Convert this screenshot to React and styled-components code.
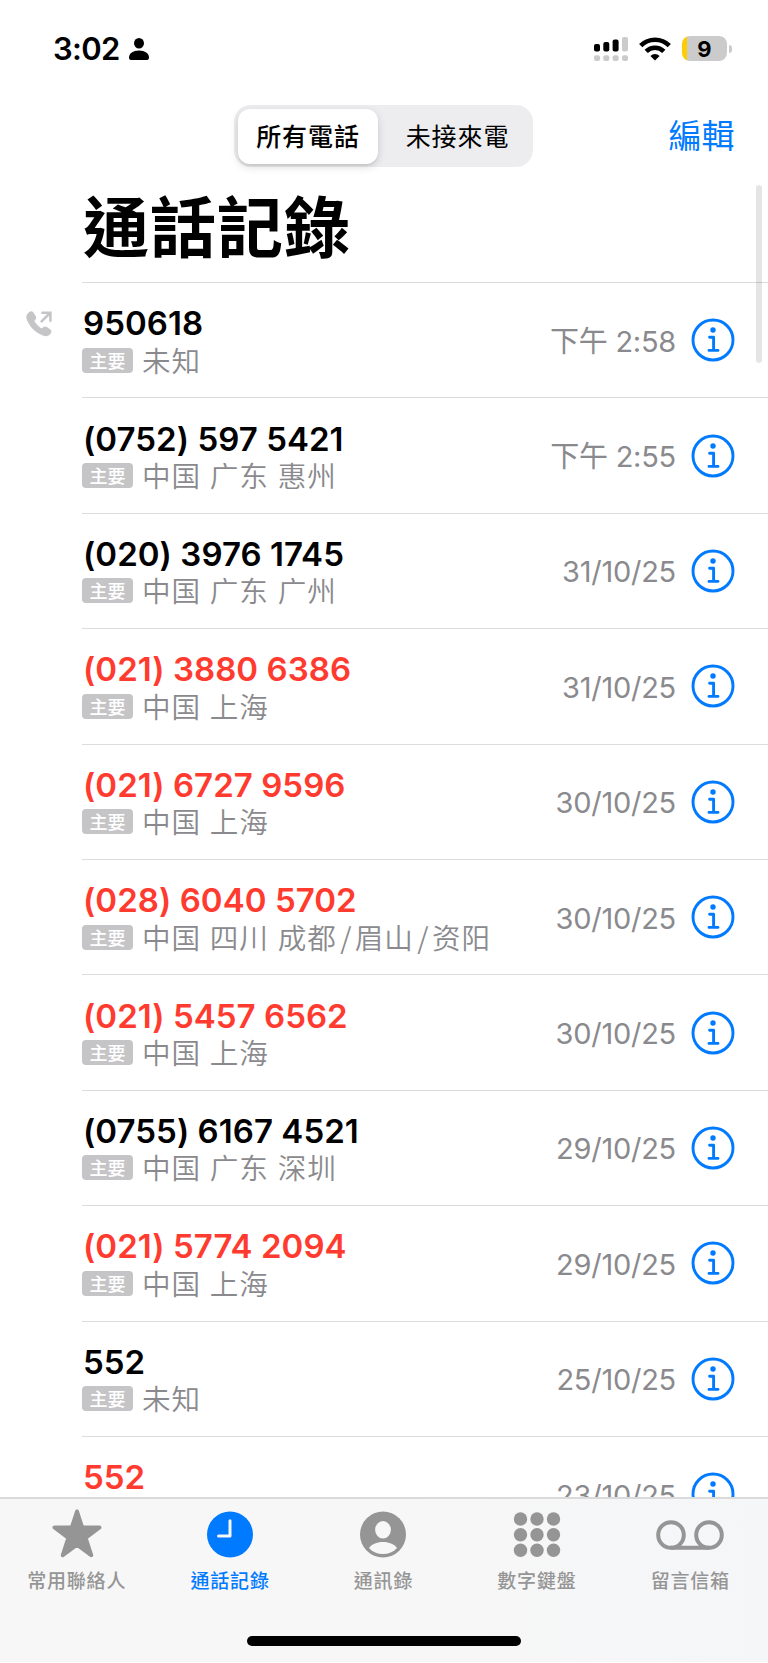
import React, { Fragment } from 'react';
import styled, { createGlobalStyle } from 'styled-components';

const GlobalStyle = createGlobalStyle`
    * {
        box-sizing: border-box;
    }
    body {
        margin: 0;
        background: #fff;
        font-family: Inter, "Noto Sans CJK TC", sans-serif;
        color: #000;
    }
    svg {
        display: block;
        flex-shrink: 0;
    }
`;

const Screen = styled.div`
    position: relative;
    display: flex;
    flex-direction: column;
    width: 768px;
    height: 1663px;
    padding-bottom: 1px;
    overflow: hidden;
    background: #fff;
`;

const StatusBar = styled.header`
    display: flex;
    justify-content: space-between;
    height: 105px;
    padding: 28.5px 36px 0 53px;
`;

const StatusGroup = styled.div`
    display: flex;
    align-items: center;
    gap: ${props => props.gap}px;
    height: 40px;
`;

const Clock = styled.span`
    font-size: 31px;
    font-weight: 600;
    line-height: 40px;
    letter-spacing: -0.7px;
`;

const Battery = styled.div`
    display: flex;
    align-items: center;
    gap: 2px;
    .cell {
        width: 45px;
        height: 25px;
        border-radius: 8px;
        background: linear-gradient(to right, #ffcc00 4.5px, #cbcbcb 4.5px);
        font-size: 22px;
        font-weight: 700;
        line-height: 26px;
        text-align: center;
    }
    .nub {
        width: 3px;
        height: 8px;
        border-radius: 0 4px 4px 0;
        background: #cbcbcb;
    }
`;

const NavBar = styled.nav`
    display: grid;
    grid-template-columns: 234px 299px 1fr;
    align-items: center;
    height: 62px;
`;

const Segmented = styled.div`
    grid-column: 2;
    display: flex;
    gap: 8px;
    height: 62px;
    padding: 3.5px 4px;
    border-radius: 17px;
    background: #ededef;
`;

const Segment = styled.button`
    flex: ${props => props.active ? '0 0 140px' : '1'};
    padding: 0 0 2px;
    border: 0;
    border-radius: 12px;
    background: ${props => props.active ? '#fff' : 'transparent'};
    box-shadow: ${props => props.active ? '0 3px 8px rgba(0, 0, 0, 0.14), 0 2px 2px rgba(0, 0, 0, 0.06)' : 'none'};
    color: #000;
    font: ${props => props.active ? 500 : 400} 25px/52px "Noto Sans CJK TC", sans-serif;
    letter-spacing: 0.9px;
`;

const EditButton = styled.button`
    justify-self: end;
    margin-right: 33.5px;
    padding: 0 0 4px;
    border: 0;
    background: none;
    color: #007aff;
    font: 400 33px/58px "Noto Sans CJK TC", sans-serif;
`;

const Title = styled.h1`
    height: 115px;
    margin: 0;
    padding-left: 83px;
    font: 700 66px/113px "Noto Sans CJK TC", sans-serif;
    letter-spacing: 1px;
`;

const CallList = styled.ul`
    flex: 1;
    min-height: 0;
    margin: 0;
    padding: 0;
    overflow: hidden;
    list-style: none;
`;

const CallRow = styled.li`
    display: grid;
    grid-template-columns: 82px 1fr;
    height: 115.4px;
`;

const Direction = styled.div`
    padding: 29px 0 0 26px;
`;

const CallBody = styled.div`
    display: flex;
    align-items: center;
    justify-content: space-between;
    padding-right: 33px;
    border-top: 1px solid #dcdcde;
`;

const Caller = styled.div`
    align-self: flex-start;
    padding-top: 20.2px;
`;

const Number = styled.div`
    padding-left: 1px;
    color: ${props => props.missed ? '#ff3b30' : '#000'};
    font-size: 33px;
    font-weight: 600;
    line-height: 40px;
    letter-spacing: 0.05px;
`;

const Place = styled.div`
    display: flex;
    align-items: center;
    gap: 9px;
    height: 34px;
    color: #8a8a8e;
    font: 350 28.6px/34px "Noto Sans CJK SC", sans-serif;
    letter-spacing: 0.9px;
    word-spacing: 1.6px;
    white-space: nowrap;
    div {
        padding-bottom: 1px;
    }
`;

const Slash = styled.span`
    margin: 0 2.5px 0 3.5px;
`;

const Badge = styled.span`
    width: 51px;
    height: 25px;
    border-radius: 4px;
    background: #c5c5c7;
    color: #fff;
    font: 500 18px/24px "Noto Sans CJK TC", sans-serif;
    letter-spacing: 0;
    text-align: center;
`;

const When = styled.div`
    display: flex;
    align-items: center;
    gap: 15px;
    color: #8a8a8e;
    font-family: Inter, "Noto Sans CJK TC", sans-serif;
    font-size: 29px;
    font-weight: 375;
    line-height: 40px;
    letter-spacing: -0.25px;
    span {
        padding-top: 3px;
    }
`;

const ScrollThumb = styled.div`
    position: absolute;
    top: 185px;
    right: 6px;
    width: 6px;
    height: 178px;
    border-radius: 3px;
    background: rgba(0, 0, 0, 0.1);
`;

const TabBar = styled.footer`
    height: 165px;
    border-top: 2px solid #dadadb;
    background: linear-gradient(to right, #f7f7f7 50%, #f5f6f8);
`;

const Tabs = styled.div`
    display: grid;
    grid-template-columns: repeat(5, 1fr);
    height: 137px;
    padding: 10px 1px 0 0;
`;

const Tab = styled.a`
    display: flex;
    flex-direction: column;
    align-items: center;
    color: ${props => props.active ? '#007aff' : '#959595'};
    font: 500 19px/28px "Noto Sans CJK TC", sans-serif;
    letter-spacing: 0.8px;
    svg {
        margin-bottom: 5px;
    }
`;

const HomeIndicator = styled.div`
    width: 274px;
    height: 10px;
    margin: 0 auto;
    border-radius: 5px;
    background: #000;
`;

const calls = [
    { number: '950618', place: '未知', when: '下午 2:58', outgoing: true },
    { number: '(0752) 597 5421', place: '中国 广东 惠州', when: '下午 2:55' },
    { number: '(020) 3976 1745', place: '中国 广东 广州', when: '31/10/25' },
    { number: '(021) 3880 6386', place: '中国 上海', when: '31/10/25', missed: true },
    { number: '(021) 6727 9596', place: '中国 上海', when: '30/10/25', missed: true },
    { number: '(028) 6040 5702', place: '中国 四川 成都/眉山/资阳', when: '30/10/25', missed: true },
    { number: '(021) 5457 6562', place: '中国 上海', when: '30/10/25', missed: true },
    { number: '(0755) 6167 4521', place: '中国 广东 深圳', when: '29/10/25' },
    { number: '(021) 5774 2094', place: '中国 上海', when: '29/10/25', missed: true },
    { number: '552', place: '未知', when: '25/10/25' },
    { number: '552', when: '23/10/25', missed: true },
];

const PersonIcon = () => (
    <svg width="20" height="22" viewBox="0 0 20 22">
        <ellipse cx="10" cy="5.3" rx="5" ry="5.3" />
        <path d="M0 19.5C0 15.5 4 12.6 10 12.6S20 15.5 20 19.5C20 21 19.3 22 18 22H2C.7 22 0 21 0 19.5Z" />
    </svg>
);

const SignalIcon = () => (
    <svg width="34" height="24" viewBox="0 0 34 24">
        <rect x="0" y="7" width="6" height="7.5" rx="2" />
        <rect x="9.3" y="5" width="6" height="9.5" rx="2" />
        <rect x="18.6" y="2.5" width="6" height="12" rx="2" />
        <rect x="28" y="0" width="6" height="14.5" rx="2" fill="#cbcbcb" />
        {[0, 9.3, 18.6, 28].map(x => <rect key={x} x={x} y="18.2" width="6" height="5.8" rx="2" fill="#cbcbcb" />)}
    </svg>
);

const WifiIcon = () => (
    <svg width="32" height="24" viewBox="0 0 32 24">
        <g fill="none" stroke="#000" strokeWidth="4.6">
            <path d="M1.7 8.7A20.2 20.2 0 0 1 30.3 8.7" />
            <path d="M7.2 14.3A12.5 12.5 0 0 1 24.8 14.3" />
        </g>
        <path d="M11.4 18.9A6.7 6.7 0 0 1 20.6 18.9L16 23.5Z" />
    </svg>
);

const OutgoingIcon = () => (
    <svg width="26" height="26" viewBox="0 0 26 26" fill="#c5c5c7">
        <path d="M3 1.2C4.6-.2 6.3 0 7.5 1.7L9.7 5C10.6 6.5 10.3 7.8 9 9.1C8.3 9.8 8.4 10.3 8.9 11.1C10.3 13.3 12.3 15.4 14.7 17C15.5 17.5 16.1 17.5 16.7 16.8C18 15.4 19.3 15.2 20.8 16.1L24 18.2C25.7 19.4 25.8 21.2 24.5 22.8C22.7 25.2 20.1 25.7 17 24.6C9.3 21.8 3 15.3.7 8.3C-.2 5.5.5 3.3 3 1.2Z" />
        <path d="M15.6 10.4L24 2M16.4 1.7H24.4V9.8" fill="none" stroke="#c5c5c7" strokeWidth="2.5" strokeLinecap="round" />
    </svg>
);

const InfoIcon = () => (
    <svg width="44" height="44" viewBox="0 0 44 44" fill="none" stroke="#007aff">
        <circle cx="22" cy="22" r="20" strokeWidth="2.9" />
        <circle cx="22" cy="12" r="2.7" fill="#007aff" stroke="none" />
        <path d="M18.6 19.2H22.6V32.4M18 32.4H27" strokeWidth="2.9" strokeLinecap="round" strokeLinejoin="round" />
    </svg>
);

const FavouritesIcon = () => (
    <svg width="52" height="52" viewBox="0 0 52 52" fill="currentColor" stroke="currentColor" strokeWidth="4" strokeLinejoin="round">
        <path d="M26 2.5L31.2 18.5H48.5L34.6 28.8L40.2 46.2L26 35.6L11.8 46.2L17.4 28.8L3.5 18.5H20.8Z" />
    </svg>
);

const RecentsIcon = () => (
    <svg width="52" height="52" viewBox="0 0 52 52">
        <circle cx="26" cy="25.5" r="23" fill="currentColor" />
        <path d="M26 11.7V26.9H14.5" fill="none" stroke="#f7f7f7" strokeWidth="3" strokeLinecap="round" strokeLinejoin="round" />
    </svg>
);

const ContactsIcon = () => (
    <svg width="52" height="52" viewBox="0 0 52 52">
        <circle cx="26" cy="25.5" r="23" fill="currentColor" />
        <ellipse cx="26" cy="20.8" rx="7.9" ry="8.7" fill="#f7f7f7" />
        <path d="M12 39C14.5 35.5 19.5 33 26 33S37.5 35.5 40 39C36.5 43 31.5 45 26 45S15.5 43 12 39Z" fill="#f7f7f7" />
    </svg>
);

const KeypadIcon = () => (
    <svg width="52" height="52" viewBox="0 0 52 52" fill="currentColor">
        {[10, 25.7, 41.2].map(y => (
            <Fragment key={y}>
                {[9.5, 26, 42.5].map(x => <circle key={x} cx={x} cy={y} r="6.7" />)}
            </Fragment>
        ))}
    </svg>
);

const VoicemailIcon = () => (
    <svg width="68" height="52" viewBox="0 0 68 52" fill="none" stroke="currentColor" strokeWidth="4">
        <circle cx="15" cy="26" r="12.8" />
        <circle cx="53" cy="26" r="12.8" />
        <path d="M15 38.8H53" />
    </svg>
);

const tabs = [
    { label: '常用聯絡人', Icon: FavouritesIcon },
    { label: '通話記錄', Icon: RecentsIcon, active: true },
    { label: '通訊錄', Icon: ContactsIcon },
    { label: '數字鍵盤', Icon: KeypadIcon },
    { label: '留言信箱', Icon: VoicemailIcon },
];

const Call = ({ data }) => {
    return <CallRow>
        <Direction>{data.outgoing && <OutgoingIcon />}</Direction>
        <CallBody>
            <Caller>
                <Number missed={data.missed ? 1 : undefined}>{data.number}</Number>
                {data.place && <Place>
                    <Badge>主要</Badge>
                    <div>
                        {data.place.split('/').map((item, index) => (
                            <Fragment key={index}>{index > 0 && <Slash>/</Slash>}{item}</Fragment>
                        ))}
                    </div>
                </Place>}
            </Caller>
            <When><span>{data.when}</span><InfoIcon /></When>
        </CallBody>
    </CallRow>
}

const App = () => {
    return (
        <Fragment>
            <GlobalStyle />
            <Screen>
                <StatusBar>
                    <StatusGroup gap={9}>
                        <Clock>3:02</Clock>
                        <PersonIcon />
                    </StatusGroup>
                    <StatusGroup gap={11}>
                        <SignalIcon />
                        <WifiIcon />
                        <Battery>
                            <div className="cell">9</div>
                            <div className="nub" />
                        </Battery>
                    </StatusGroup>
                </StatusBar>
                <NavBar>
                    <Segmented>
                        <Segment active={1}>所有電話</Segment>
                        <Segment>未接來電</Segment>
                    </Segmented>
                    <EditButton>編輯</EditButton>
                </NavBar>
                <Title>通話記錄</Title>
                <CallList>
                    {calls.map((item, index) => <Call key={index} data={item} />)}
                </CallList>
                <TabBar>
                    <Tabs>
                        {tabs.map(({ label, Icon, active }) => (
                            <Tab key={label} active={active ? 1 : undefined}>
                                <Icon />
                                {label}
                            </Tab>
                        ))}
                    </Tabs>
                    <HomeIndicator />
                </TabBar>
                <ScrollThumb />
            </Screen>
        </Fragment>
    );
}

export default App;
